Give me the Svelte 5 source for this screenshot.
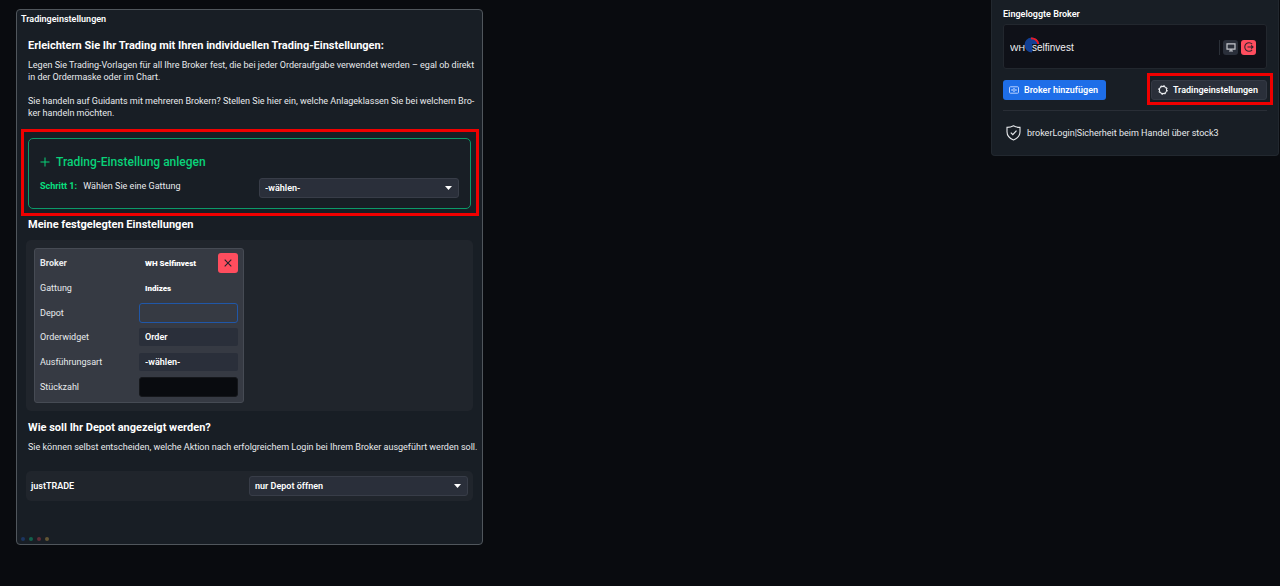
<script lang="ts">
  const genres = ['-wählen-', 'Aktien', 'Indizes', 'Devisen']
  const depotActions = ['nur Depot öffnen', 'Depot und Orderbuch öffnen', 'keine Aktion']
  const orderTypes = ['-wählen-', 'Market', 'Limit']
  const themeDots = ['blue', 'green', 'red', 'yellow']

  let genre = $state('-wählen-')
  let depotAction = $state('nur Depot öffnen')
  let depot = $state('')
  let widget = $state('Order')
  let orderType = $state('-wählen-')
  let quantity = $state('')
</script>

<div class="desktop">
  <main class="panel settings">
    <h1>Tradingeinstellungen</h1>

    <section class="intro">
      <h2>Erleichtern Sie Ihr Trading mit Ihren individuellen Trading-Einstellungen:</h2>
      <p>
        Legen Sie Trading-Vorlagen für all Ihre Broker fest, die bei jeder Orderaufgabe verwendet werden – egal ob direkt<br />
        in der Ordermaske oder im Chart.
      </p>
      <p>
        Sie handeln auf Guidants mit mehreren Brokern? Stellen Sie hier ein, welche Anlageklassen Sie bei welchem Bro-<br />
        ker handeln möchten.
      </p>
    </section>

    <div class="marker">
      <section class="create">
        <h3>
          <svg width="10" height="10" viewBox="0 0 10 10" aria-hidden="true">
            <path d="M5 0.5v9M0.5 5h9" stroke="currentColor" fill="none" />
          </svg>
          Trading-Einstellung anlegen
        </h3>
        <div class="step">
          <label for="genre"><strong>Schritt 1:</strong> Wählen Sie eine Gattung</label>
          <span class="select">
            <select id="genre" bind:value={genre}>
              {#each genres as item}
                <option>{item}</option>
              {/each}
            </select>
            <svg width="7" height="4" viewBox="0 0 7 4" aria-hidden="true"><path d="M0 0h7L3.5 4z" fill="#fff" /></svg>
          </span>
        </div>
      </section>
    </div>

    <h2 class="saved-title">Meine festgelegten Einstellungen</h2>
    <section class="well">
      <div class="card">
        <div class="field">
          <strong>Broker</strong>
          <div class="broker">
            <span class="value">WH Selfinvest</span>
            <button class="delete" aria-label="Einstellung löschen">
              <svg width="8" height="8" viewBox="0 0 8 8" aria-hidden="true">
                <path d="M0.7 0.7l6.6 6.6M7.3 0.7L0.7 7.3" stroke="#20242d" stroke-width="1.1" />
              </svg>
            </button>
          </div>
        </div>
        <div class="field">
          <span>Gattung</span>
          <span class="value">Indizes</span>
        </div>
        <div class="field">
          <label for="depot">Depot</label>
          <input id="depot" bind:value={depot} />
        </div>
        <div class="field">
          <label for="widget">Orderwidget</label>
          <select id="widget" bind:value={widget}>
            <option>Order</option>
          </select>
        </div>
        <div class="field">
          <label for="order-type">Ausführungsart</label>
          <select id="order-type" bind:value={orderType}>
            {#each orderTypes as item}
              <option>{item}</option>
            {/each}
          </select>
        </div>
        <div class="field">
          <label for="quantity">Stückzahl</label>
          <input id="quantity" class="dark" bind:value={quantity} />
        </div>
      </div>
    </section>

    <section class="display">
      <h2>Wie soll Ihr Depot angezeigt werden?</h2>
      <p>Sie können selbst entscheiden, welche Aktion nach erfolgreichem Login bei Ihrem Broker ausgeführt werden soll.</p>
    </section>
    <div class="well depot-row">
      <label for="depot-action">justTRADE</label>
      <span class="select">
        <select id="depot-action" bind:value={depotAction}>
          {#each depotActions as item}
            <option>{item}</option>
          {/each}
        </select>
        <svg width="7" height="4" viewBox="0 0 7 4" aria-hidden="true"><path d="M0 0h7L3.5 4z" fill="#fff" /></svg>
      </span>
    </div>

    <div class="dots">
      {#each themeDots as dot}
        <i class={dot}></i>
      {/each}
    </div>
  </main>

  <aside class="panel brokers">
    <h1>Eingeloggte Broker</h1>
    <div class="account">
      <svg class="logo" width="72" height="20" viewBox="0 0 72 20" role="img" aria-label="WH selfinvest">
        <path d="M22 8V7h7.4A7.5 7.5 0 1 0 22 15.500z" fill="#123f94" />
        <path d="M21 0.600a7.500 7.500 0 0 1 8.300 6.400h-1.800A6 6 0 0 0 21 2.400z" fill="#f01820" />
        <text x="0" y="14" font-size="9">WH</text>
        <text x="22" y="14" font-size="10">selfinvest</text>
      </svg>
      <div class="account-actions">
        <button aria-label="Desktop">
          <svg width="10" height="9" viewBox="0 0 10 9" aria-hidden="true">
            <path d="M1 0.8h8v5.4H1zM5 6.2v1.6M3 8h4" fill="none" stroke="#c5c8ce" stroke-width="1.2" />
          </svg>
        </button>
        <button class="logout" aria-label="Abmelden">
          <svg width="10" height="10" viewBox="0 0 10 10" aria-hidden="true">
            <path d="M8.1 2.2A4.2 4.2 0 1 0 8.1 7.8M3.5 5h5.3M7.2 3.4L9 5 7.2 6.6" fill="none" stroke="#30242d" stroke-width="1.1" />
          </svg>
        </button>
      </div>
    </div>

    <div class="buttons">
      <button class="add">
        <svg width="10" height="8" viewBox="0 0 10 8" aria-hidden="true">
          <rect x="0.5" y="0.8" width="9" height="6.4" rx="0.8" fill="none" stroke="#b9d1ff" />
          <circle cx="5" cy="4" r="1.3" fill="none" stroke="#b9d1ff" />
          <path d="M2 4h1M7 4h1" stroke="#b9d1ff" />
        </svg>
        Broker hinzufügen
      </button>
      <button class="open-settings">
        <svg width="10" height="10" viewBox="0 0 10 10" aria-hidden="true">
          <circle cx="5" cy="5" r="3.6" fill="none" stroke="#eef0f3" stroke-width="1.1" />
          <circle cx="5" cy="5" r="4.4" fill="none" stroke="#eef0f3" stroke-width="1" stroke-dasharray="1.5 1.95" />
        </svg>
        Tradingeinstellungen
      </button>
    </div>

    <a class="security" href="#sicherheit">
      <svg width="15" height="16" viewBox="0 0 15 16" aria-hidden="true">
        <path d="M7.5 0.8C5.4 2 3.2 2.4 1 2.4v4.4c0 3.8 2.3 6.5 6.5 8.2 4.2-1.7 6.5-4.4 6.5-8.2V2.4C11.8 2.4 9.6 2 7.5 0.8z" fill="none" stroke="#e8eaed" stroke-width="1.1" />
        <path d="M4.8 7.6l2 2 3.7-4" fill="none" stroke="#e8eaed" stroke-width="1.2" />
      </svg>
      brokerLogin|Sicherheit beim Handel über stock3
    </a>
  </aside>
</div>

<style>
  :global(body) {
    background: #090b0f;
  }

  .desktop {
    display: flex;
    align-items: flex-start;
    justify-content: space-between;
    padding: 0 1px 0 16px;
    color: #e8eaed;
    font: 9px/12px Roboto, 'Liberation Sans', sans-serif;
  }

  .panel {
    box-sizing: border-box;
    background: #181e25;
  }

  .settings {
    flex: 0 1 467px;
    min-width: 0;
    margin-top: 9px;
    padding: 3px 9px 3px 4px;
    border: 1px solid #50565c;
    border-radius: 4px;
  }

  h1,
  h2,
  h3,
  p {
    margin: 0;
  }

  h1 {
    color: #fff;
    font-size: 9px;
    font-weight: 600;
    line-height: 12px;
  }

  h2 {
    color: #fff;
    font-size: 11px;
    font-weight: 700;
    line-height: 16px;
  }

  p + p {
    margin-top: 12px;
  }

  button,
  input,
  select {
    box-sizing: border-box;
    margin: 0;
    font: inherit;
  }

  button {
    display: flex;
    align-items: center;
    justify-content: center;
    padding: 0;
    border: 0;
    border-radius: 3px;
    background: #2a2f3a;
    color: #fff;
    cursor: pointer;
  }

  select {
    width: 100%;
    height: 18px;
    padding: 0 6px;
    border: 0;
    border-radius: 2px;
    appearance: none;
    background: #2a2f3a;
    color: #fff;
    font-weight: 600;
  }

  .intro {
    padding: 13px 0 10px 7px;
    white-space: nowrap;
  }

  .intro h2 {
    margin-bottom: 5px;
  }

  .marker {
    margin-right: -6px;
    padding: 6px 5px 4px 4px;
    border: 3px solid #f00000;
  }

  .create {
    padding: 15px 11px 10px;
    border: 1px solid #0b9a69;
    border-radius: 5px;
  }

  h3 {
    display: flex;
    align-items: center;
    gap: 6px;
    color: #09d279;
    font-size: 12px;
    font-weight: 500;
    line-height: 16px;
  }

  .step {
    display: flex;
    justify-content: space-between;
    margin-top: 8px;
  }

  .step label {
    padding-top: 2px;
  }

  .step strong {
    margin-right: 4px;
    color: #09e080;
  }

  .select {
    display: grid;
    width: 200px;
    align-items: center;
  }

  .select select,
  .select svg {
    grid-area: 1 / 1;
  }

  .select select {
    height: 20px;
    padding: 0 5px;
    border: 1px solid #383d48;
    border-radius: 3px;
  }

  .select svg {
    justify-self: end;
    margin-right: 7px;
    pointer-events: none;
  }

  .saved-title {
    padding: 1px 0 7px 7px;
  }

  .well {
    margin-left: 5px;
    padding: 8px;
    border-radius: 5px;
    background: #20252c;
  }

  .card {
    display: grid;
    grid-template-rows: repeat(6, 1fr);
    box-sizing: border-box;
    width: 210px;
    min-height: 155px;
    padding: 2px 5px 3px;
    border: 1px solid #464b54;
    border-radius: 3px;
    background: #363a43;
  }

  .field {
    display: grid;
    grid-template-columns: 99px 1fr;
    align-items: center;
  }

  .field input {
    width: 100%;
    height: 20px;
    padding: 0 6px;
    border: 1px solid #2057a8;
    border-radius: 3px;
    background: transparent;
    color: #fff;
  }

  .field .dark {
    border-color: #15171b;
    background: #090b0f;
  }

  .broker {
    display: flex;
    align-items: center;
    justify-content: space-between;
  }

  .value {
    padding: 2px 0 0 6px;
    color: #fff;
    font-size: 8px;
    font-weight: 900;
  }

  .delete {
    width: 20px;
    height: 20px;
    background: #ff4d5e;
  }

  .display {
    padding: 9px 0 18px 7px;
    white-space: nowrap;
  }

  .display h2 {
    margin-bottom: 5px;
  }

  .depot-row {
    display: flex;
    align-items: center;
    justify-content: space-between;
    padding: 5px;
  }

  .depot-row label {
    color: #fff;
    font-weight: 600;
  }

  .depot-row .select {
    width: 219px;
  }

  .dots {
    display: flex;
    gap: 4px;
    margin-top: 36px;
  }

  .dots i {
    width: 4px;
    height: 4px;
    border-radius: 50%;
  }

  .blue {
    background: #1c3560;
  }

  .green {
    background: #13604c;
  }

  .red {
    background: #602c37;
  }

  .yellow {
    background: #625535;
  }

  .brokers {
    flex: 0 1 288px;
    padding: 8px 11px 14px;
    border: 1px solid #22282f;
    border-top: 0;
    border-radius: 0 0 4px 4px;
  }

  .account {
    display: flex;
    align-items: center;
    justify-content: space-between;
    margin-top: 4px;
    padding: 12px 10px 11px 6px;
    border: 1px solid #22272e;
    border-radius: 3px;
    background: #0f1118;
  }

  .logo text {
    fill: #f1f2f4;
    font-family: 'Liberation Sans', sans-serif;
  }

  .account-actions {
    display: flex;
    gap: 3px;
    padding-left: 3px;
    border-left: 1px solid #2b3038;
  }

  .account-actions button {
    width: 15px;
    height: 15px;
  }

  .account-actions .logout {
    background: #ff4d5e;
  }

  .buttons {
    display: flex;
    justify-content: space-between;
    padding: 11px 0 10px;
    border-bottom: 1px solid #292e36;
  }

  .buttons button {
    height: 20px;
    gap: 5px;
    font-weight: 600;
  }

  .buttons .add {
    padding: 0 8px 0 6px;
    background: #1e6ee8;
  }

  .buttons .open-settings {
    position: relative;
    padding: 0 8px 0 6px;
    border: 1px solid #343944;
  }

  /* highlight frame around the settings button */
  .open-settings::after {
    position: absolute;
    inset: -8px -7px -6px -5px;
    border: 3px solid #f00000;
    content: '';
    pointer-events: none;
  }

  .security {
    display: flex;
    align-items: center;
    gap: 6px;
    margin-top: 14px;
    padding-left: 3px;
    color: inherit;
    text-decoration: none;
  }
</style>
